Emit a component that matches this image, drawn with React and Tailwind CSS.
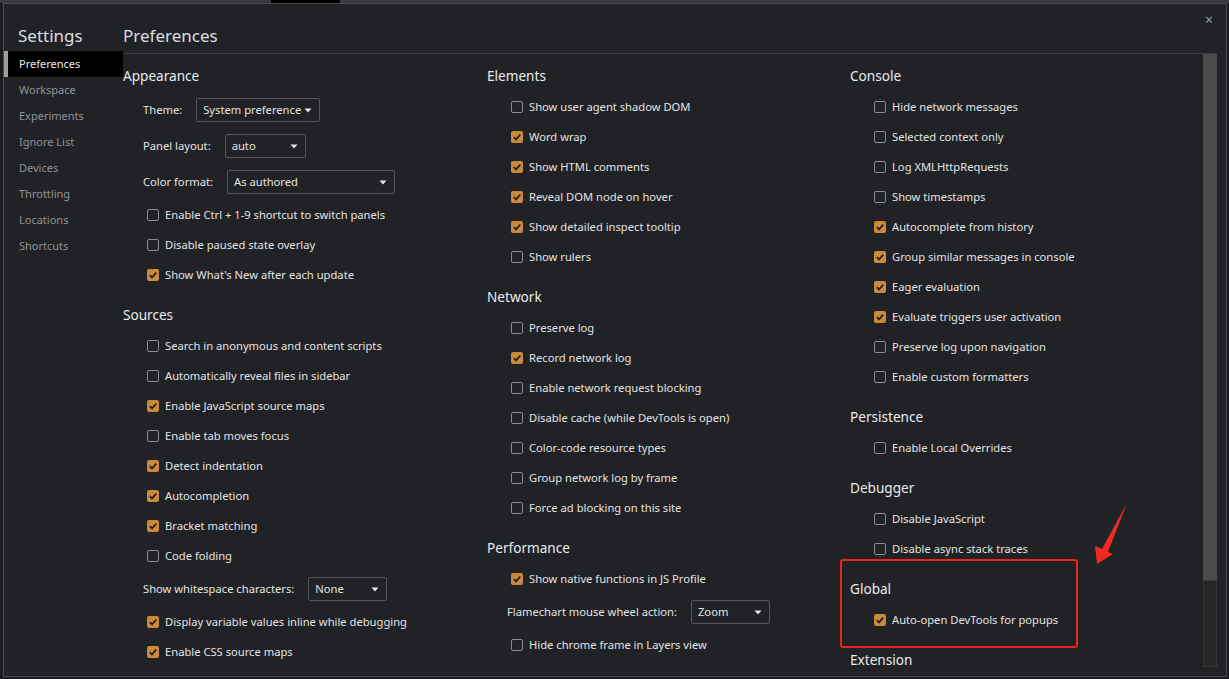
import React from "react";

const FONT = { fontFamily: '"Noto Sans", "Open Sans", sans-serif' };

const col1 = [
  {
    title: "Appearance",
    rows: [
      { t: "s", label: "Theme:", value: "System preference", w: "w-[124px]" },
      { t: "s", label: "Panel layout:", value: "auto", w: "w-[81px]" },
      { t: "s", label: "Color format:", value: "As authored", w: "w-[168px]" },
      { t: "c", label: "Enable Ctrl + 1-9 shortcut to switch panels", on: false },
      { t: "c", label: "Disable paused state overlay", on: false },
      { t: "c", label: "Show What's New after each update", on: true },
    ],
  },
  {
    title: "Sources",
    rows: [
      { t: "c", label: "Search in anonymous and content scripts", on: false },
      { t: "c", label: "Automatically reveal files in sidebar", on: false },
      { t: "c", label: "Enable JavaScript source maps", on: true },
      { t: "c", label: "Enable tab moves focus", on: false },
      { t: "c", label: "Detect indentation", on: true },
      { t: "c", label: "Autocompletion", on: true },
      { t: "c", label: "Bracket matching", on: true },
      { t: "c", label: "Code folding", on: false },
      { t: "s", label: "Show whitespace characters:", value: "None", w: "w-[79px]" },
      { t: "c", label: "Display variable values inline while debugging", on: true },
      { t: "c", label: "Enable CSS source maps", on: true },
    ],
  },
];

const col2 = [
  {
    title: "Elements",
    rows: [
      { t: "c", label: "Show user agent shadow DOM", on: false },
      { t: "c", label: "Word wrap", on: true },
      { t: "c", label: "Show HTML comments", on: true },
      { t: "c", label: "Reveal DOM node on hover", on: true },
      { t: "c", label: "Show detailed inspect tooltip", on: true },
      { t: "c", label: "Show rulers", on: false },
    ],
  },
  {
    title: "Network",
    rows: [
      { t: "c", label: "Preserve log", on: false },
      { t: "c", label: "Record network log", on: true },
      { t: "c", label: "Enable network request blocking", on: false },
      { t: "c", label: "Disable cache (while DevTools is open)", on: false },
      { t: "c", label: "Color-code resource types", on: false },
      { t: "c", label: "Group network log by frame", on: false },
      { t: "c", label: "Force ad blocking on this site", on: false },
    ],
  },
  {
    title: "Performance",
    rows: [
      { t: "c", label: "Show native functions in JS Profile", on: true },
      { t: "s", label: "Flamechart mouse wheel action:", value: "Zoom", w: "w-[79px]" },
      { t: "c", label: "Hide chrome frame in Layers view", on: false },
    ],
  },
];

const col3 = [
  {
    title: "Console",
    rows: [
      { t: "c", label: "Hide network messages", on: false },
      { t: "c", label: "Selected context only", on: false },
      { t: "c", label: "Log XMLHttpRequests", on: false },
      { t: "c", label: "Show timestamps", on: false },
      { t: "c", label: "Autocomplete from history", on: true },
      { t: "c", label: "Group similar messages in console", on: true },
      { t: "c", label: "Eager evaluation", on: true },
      { t: "c", label: "Evaluate triggers user activation", on: true },
      { t: "c", label: "Preserve log upon navigation", on: false },
      { t: "c", label: "Enable custom formatters", on: false },
    ],
  },
  { title: "Persistence", rows: [{ t: "c", label: "Enable Local Overrides", on: false }] },
  {
    title: "Debugger",
    rows: [
      { t: "c", label: "Disable JavaScript", on: false },
      { t: "c", label: "Disable async stack traces", on: false },
    ],
  },
  { title: "Global", rows: [{ t: "c", label: "Auto-open DevTools for popups", on: true }] },
  { title: "Extension", rows: [] },
];

function Checkbox({ on }) {
  if (on) {
    return (
      <span className="flex h-[12px] w-[12px] shrink-0 items-center justify-center rounded-[2px] bg-[#c98a3c]">
        <svg width="10" height="10" viewBox="0 0 10 10">
          <path d="M1.8 5.2 L4 7.4 L8.3 2.6" fill="none" stroke="#202124" strokeWidth="1.7" />
        </svg>
      </span>
    );
  }
  return <span className="h-[12px] w-[12px] shrink-0 rounded-[2px] border border-[#8a8c90]" />;
}

function Row({ r }) {
  if (r.t === "c") {
    return (
      <div className="flex h-[30px] items-center gap-[6px] pl-[24px] text-[11.2px] text-[#e3e3e3]">
        <Checkbox on={r.on} />
        <span className="whitespace-nowrap">{r.label}</span>
      </div>
    );
  }
  return (
    <div className="flex h-[36px] items-center gap-[14px] pl-[20px] text-[11.2px] text-[#e3e3e3]">
      <span className="whitespace-nowrap">{r.label}</span>
      <div
        className={`flex h-[24px] ${r.w} shrink-0 items-center justify-between rounded-[2px] border border-[#54565a] bg-[#212225] pl-[6px] pr-[7px]`}
      >
        <span className="whitespace-nowrap">{r.value}</span>
        <svg width="8" height="5" viewBox="0 0 8 5">
          <path d="M0.5 0.5 L7.5 0.5 L4 4.5 Z" fill="#e3e3e3" />
        </svg>
      </div>
    </div>
  );
}

function Column({ sections, w }) {
  return (
    <div className={`flex ${w} shrink-0 flex-col gap-[9px]`}>
      {sections.map((s) => (
        <div key={s.title} className="flex flex-col">
          <div className="flex h-[32px] items-center text-[13.6px] text-[#e8eaed]">{s.title}</div>
          {s.rows.map((r) => (
            <Row key={r.label} r={r} />
          ))}
        </div>
      ))}
    </div>
  );
}

const sideItems = ["Preferences", "Workspace", "Experiments", "Ignore List", "Devices", "Throttling", "Locations", "Shortcuts"];

export default function App() {
  return (
    <div className="relative flex h-[679px] w-[1229px] flex-col overflow-hidden bg-[#1c1c1e]" style={FONT}>
      <div className="flex h-[3px] shrink-0">
        <div className="w-[271px] bg-[#3a3a3c]" />
        <div className="w-[69px] bg-black" />
        <div className="flex-1 bg-[#3a3a3c]" />
      </div>
      <div className="flex min-h-0 flex-1 pb-[2px] pl-[3px] pr-[2px]">
        <div className="relative flex min-w-0 flex-1 border border-[#4a4b4e] bg-[#212225]">
          {/* Sidebar */}
          <div className="flex w-[119px] shrink-0 flex-col">
            <div className="flex h-[47px] items-end pb-[3px] pl-[14px] text-[17px] leading-[24px] text-[#dadce0]">
              Settings
            </div>
            <div className="flex flex-col">
              {sideItems.map((it, i) =>
                i === 0 ? (
                  <div key={it} className="flex h-[26px] items-stretch">
                    <div className="w-[4px] bg-[#9d9d9d]" />
                    <div className="flex flex-1 items-center bg-black pl-[11px] text-[11px] text-[#e8eaed]">{it}</div>
                  </div>
                ) : (
                  <div key={it} className="flex h-[26px] items-center pl-[15px] text-[11px] text-[#8f9297]">
                    {it}
                  </div>
                )
              )}
            </div>
          </div>
          {/* Main */}
          <div className="flex min-w-0 flex-1 flex-col pr-[9px]">
            <div className="flex h-[50px] shrink-0 items-end justify-between border-b border-[#393a3d]">
              <div className="pb-[5px] text-[17px] leading-[24px] text-[#dadce0]">Preferences</div>
              <div className="mr-[4px] self-start pt-[9px] text-[14px] leading-[14px] text-[#9aa0a6]">×</div>
            </div>
            <div className="flex min-h-0 min-w-0 flex-1 overflow-hidden">
              <div className="flex min-w-0 flex-1 overflow-hidden pt-[6px]">
                <Column sections={col1} w="w-[364px]" />
                <Column sections={col2} w="w-[363px]" />
                <Column sections={col3} w="w-[364px]" />
              </div>
              <div className="flex w-[14px] shrink-0 flex-col pb-[9px]">
                <div className="h-[526px] bg-[#4b4b4c]" />
                <div className="flex-1 border border-[#353536] bg-[#262624]" />
              </div>
            </div>
          </div>
          {/* Annotation overlay */}
          <div className="pointer-events-none absolute left-[836px] top-[555px] h-[89px] w-[238px] rounded-[3px] border-2 border-[#e8251e]" />
          <svg className="pointer-events-none absolute left-[0px] top-[0px]" width="1224" height="674" viewBox="3 3 1224 674">
            <polygon points="1096,563 1094,545 1101,548 1126,502 1107,551 1112,553" fill="#ee2a22" />
          </svg>
        </div>
      </div>
    </div>
  );
}
